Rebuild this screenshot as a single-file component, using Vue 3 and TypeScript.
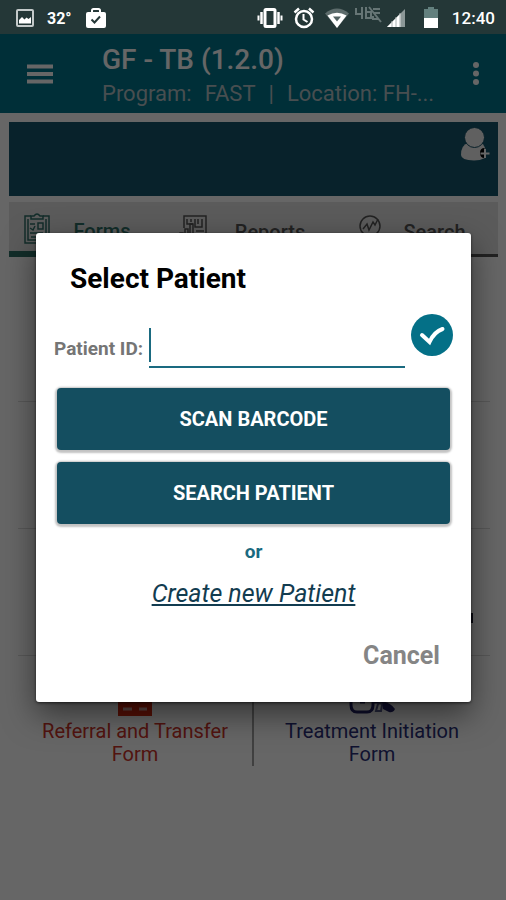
<script setup lang="ts">
import { ref } from 'vue'

interface Tab {
  id: string
  label: string
  active: boolean
}

const tabs: Tab[] = [
  { id: 'forms', label: 'Forms', active: true },
  { id: 'reports', label: 'Reports', active: false },
  { id: 'search', label: 'Search', active: false },
]

const patientId = ref('')
</script>

<template>
  <div class="screen">
    <div class="status">
      <div class="status-group left">
        <svg width="18" height="18" viewBox="0 0 18 18">
          <rect x="1" y="1" width="16" height="16" rx="1" fill="none" stroke="#c4caca" stroke-width="2" />
          <path d="M3 14.500V11l3-3 2.500 2.500 2-2L12.500 10 15 8v6.500z" fill="#fff" />
        </svg>
        <span class="temp">32°</span>
        <svg width="22" height="20" viewBox="0 0 22 20">
          <path d="M7 5V2.500Q7 1 8.500 1h5Q15 1 15 2.500V5" fill="none" stroke="#fff" stroke-width="2" />
          <rect x="1" y="4" width="20" height="16" rx="2" fill="#fff" />
          <path d="M6.500 11.500l3 3 5.500-6" fill="none" stroke="#243737" stroke-width="2" />
        </svg>
      </div>
      <div class="status-group right">
        <svg width="26" height="20" viewBox="0 0 26 20">
          <rect x="8" y="1.500" width="10" height="17" rx="1" fill="none" stroke="#fff" stroke-width="3" />
          <path d="M4.500 4v12M21.500 4v12" stroke="#fff" stroke-width="2.500" />
          <path d="M1.500 7.500v5M24.500 7.500v5" stroke="#fff" stroke-width="2" />
        </svg>
        <svg width="22" height="22" viewBox="0 0 22 22">
          <circle cx="11" cy="12" r="8" fill="none" stroke="#fff" stroke-width="2.500" />
          <path d="M1.500 5.500l4.500-4M20.500 5.500l-4.500-4" stroke="#fff" stroke-width="2.500" />
          <path d="M10.500 7v5.500l4 2.500" fill="none" stroke="#fff" stroke-width="2" />
        </svg>
        <svg width="24" height="20" viewBox="0 0 24 20">
          <path d="M0 5.500Q12-4.500 24 5.500L12 20z" fill="#5d6c6c" />
          <path d="M2.500 7.500Q12 2 21.500 7.500L12 20z" fill="#fff" />
          <path d="M8 8.500h8L12 13.500z" fill="#536363" />
        </svg>
        <svg class="i-lte" width="28" height="18" viewBox="0 0 28 18">
          <path d="M2 2v6h7M8 1v12M12 1v11h5V6h-4M19 3l7 0M20 7h6M15 1l12 15M19 10v3h5" fill="none" stroke="#667575" stroke-width="2" />
        </svg>
        <svg width="18" height="18" viewBox="0 0 18 18">
          <path d="M18 0v18H0z" fill="#8b9797" />
          <path d="M13.500 4.500V18H0z" fill="#fff" />
          <path d="M5 12v6M9 8v10M13 4v14" stroke="#a7b0b0" stroke-width="1" />
        </svg>
        <svg class="i-battery" width="16" height="22" viewBox="0 0 16 22">
          <path d="M1 2h4V0h6v2h4v9H1z" fill="#63807e" />
          <path d="M1 11h14v10H1z" fill="#fff" />
        </svg>
        <span class="clock">12:40</span>
      </div>
    </div>

    <header class="appbar">
      <button class="icon-btn" type="button" aria-label="Menu">
        <svg width="28" height="20" viewBox="0 0 28 20">
          <path d="M1 2.500h26M1 10h26M1 17.500h26" stroke="#fff" stroke-width="4" />
        </svg>
      </button>
      <div class="heading">
        <h1>GF - TB (1.2.0)</h1>
        <p>
          <span>Program:</span>
          <span>FAST</span>
          <span>|</span>
          <span>Location: FH-...</span>
        </p>
      </div>
      <button class="icon-btn" type="button" aria-label="More options">
        <svg width="8" height="26" viewBox="0 0 8 26">
          <g fill="#fff">
            <circle cx="4" cy="4" r="3" />
            <circle cx="4" cy="12.500" r="3" />
            <circle cx="4" cy="21" r="3" />
          </g>
        </svg>
      </button>
    </header>

    <main class="content">
      <section class="banner">
        <button class="icon-btn" type="button" aria-label="Add patient">
          <svg width="30" height="34" viewBox="0 0 30 34">
            <path d="M1 28Q1 18 8 16h13q4 2 5 9l-1 6q-5 2.500-11 2.500Q1 33 1 28z" fill="#f0f0f0" />
            <circle cx="14.500" cy="10.500" r="10" fill="#f0f0f0" stroke="#144f66" stroke-width="1" />
            <path d="M24.500 21Q20 21 20 26t4.500 5z" fill="#000" />
            <path d="M25 22v9M20.500 26.500h9" stroke="#fff" stroke-width="2" />
          </svg>
        </button>
      </section>

      <nav class="tabs">
        <a v-for="tab in tabs" :key="tab.id" href="#" class="tab" :class="{ active: tab.active }">
          <svg v-if="tab.id === 'forms'" width="28" height="32" viewBox="0 0 28 32">
            <g fill="none" stroke="#2f7068" stroke-width="1.500">
              <path d="M8 3H2v27h24V3h-6M5 6v21h18V6" />
              <path d="M8 6V3h3q3-4 6 0h3v3z" />
              <path d="M7 11h5M7 15l3 2 2-4M15 10h5v6h-5zM7 20h13M8 24h12" />
            </g>
          </svg>
          <svg v-else-if="tab.id === 'reports'" width="28" height="32" viewBox="0 0 28 32">
            <g fill="none" stroke="#555" stroke-width="1.500">
              <path d="M5 14V2h22v27H5M8 5v5h6M12 5v3M16 5v8h7V5M19 5v5" />
              <path d="M1 29V19h3v10M6 29V15h3v14M11 29V10h3v19M17 17h8M17 21h8" />
            </g>
          </svg>
          <svg v-else width="24" height="32" viewBox="0 0 24 32">
            <g fill="none" stroke="#555" stroke-width="1.500">
              <circle cx="11" cy="12" r="10" />
              <path d="M4 15l4-5 2 6 4-8 2 3 3-6M6 20l-4 8M16 20l5 8" />
            </g>
          </svg>
          <span>{{ tab.label }}</span>
        </a>
      </nav>

      <section class="forms">
        <div class="row first"></div>
        <div class="row"></div>
        <div class="row"><span class="edge"></span></div>
        <div class="row last">
          <a href="#" class="form referral">
            <svg width="34" height="36" viewBox="0 0 34 36">
              <rect width="34" height="36" fill="#d42a10" />
              <path d="M5 29h9M21 29h8" stroke="#e5b0a8" stroke-width="3" />
              <path d="M5 12h24" stroke="#e5b0a8" stroke-width="3" />
            </svg>
            <span>Referral and Transfer Form</span>
          </a>
          <a href="#" class="form treatment">
            <svg width="46" height="36" viewBox="0 0 46 36">
              <path d="M2 4v21q0 7 6 7h10q6 0 6-7V4z" fill="none" stroke="#24246c" stroke-width="3" />
              <path d="M11 22h5M23 22h11" stroke="#24246c" stroke-width="3" />
              <path d="M27 31l2-7q3-2 4 1l-1 6z" fill="none" stroke="#5a5f92" stroke-width="2" />
              <path d="M33 21q9 2 13 8-2 4-6 3l-6-3z" fill="#24246c" />
            </svg>
            <span>Treatment Initiation Form</span>
          </a>
        </div>
      </section>
    </main>

    <div class="overlay">
      <form class="dialog" role="dialog" aria-labelledby="dialog-title" @submit.prevent>
        <h2 id="dialog-title">Select Patient</h2>
        <div class="field">
          <label for="patient-id">Patient ID:</label>
          <div class="entry">
            <input id="patient-id" v-model="patientId" type="text" autocomplete="off" />
            <span v-if="!patientId" class="caret"></span>
          </div>
          <button class="confirm" type="submit" aria-label="Confirm">
            <svg width="42" height="42" viewBox="0 0 42 42">
              <circle cx="21" cy="21" r="21" fill="#047087" />
              <path d="M11 21l7.500 7Q23 18 31.500 15" fill="none" stroke="#fff" stroke-width="4" stroke-linecap="round" />
            </svg>
          </button>
        </div>
        <button class="action" type="button">SCAN BARCODE</button>
        <button class="action" type="button">SEARCH PATIENT</button>
        <p class="or">or</p>
        <a class="create" href="#">Create new Patient</a>
        <button class="cancel" type="button">Cancel</button>
      </form>
    </div>
  </div>
</template>

<style>
body {
  background: #fff;
}
</style>

<style scoped>
* {
  box-sizing: border-box;
}

.screen {
  position: relative;
  min-height: 100vh;
  font-family: Roboto, "Liberation Sans", sans-serif;
}

h1,
h2,
p {
  margin: 0;
}

button {
  padding: 0;
  border: 0;
  background: none;
  font-family: inherit;
  cursor: pointer;
}

a {
  text-decoration: none;
}

svg {
  display: block;
  flex: none;
}

.status {
  position: relative;
  z-index: 2;
  display: flex;
  justify-content: space-between;
  height: 34px;
  padding: 2px 11px 0 16px;
  background: #243737;
  color: #fff;
}

.status-group {
  display: flex;
  align-items: center;
}

.left {
  gap: 13px;
}

.right {
  gap: 10px;
}

.temp {
  font-size: 16px;
  font-weight: 700;
}

.i-lte {
  margin: 0 -5px 6px;
}

.i-battery {
  margin: 0 3px 0 8px;
}

.clock {
  font-size: 17px;
  font-weight: 500;
}

.appbar {
  display: flex;
  align-items: center;
  height: 79px;
  padding: 0 26px;
  background: #00758c;
  color: #fff;
}

.icon-btn {
  flex: none;
}

.heading {
  flex: 1;
  min-width: 0;
  padding: 5px 0 0 48px;
}

h1 {
  font-size: 28px;
  font-weight: 500;
  line-height: 36px;
}

.heading p {
  display: flex;
  gap: 13px;
  overflow: hidden;
  color: #b3c4c8;
  font-size: 22px;
  line-height: 32px;
  white-space: nowrap;
}

.content {
  padding: 9px 8px 0 9px;
}

.banner {
  display: flex;
  justify-content: flex-end;
  align-items: flex-start;
  height: 74px;
  padding: 5px 8px;
  background: #14556b;
}

.tabs {
  display: grid;
  grid-template-columns: 156fr 180fr 153fr;
  align-items: end;
  height: 55px;
  margin-top: 6px;
  background: #e4e4e4;
}

.tab {
  display: flex;
  align-items: center;
  height: 100%;
  padding: 4px 12px 0 14px;
  border-bottom: 3px solid #555;
  color: #555;
  font-size: 20px;
  font-weight: 500;
}

.tab span {
  flex: 1;
  padding-top: 4px;
  text-align: center;
}

.tab.active {
  border-bottom: 6px solid #2f7068;
  color: #2f7068;
}

.forms {
  padding: 0 8px 0 9px;
}

.row {
  display: flex;
  justify-content: flex-end;
  align-items: flex-end;
  height: 127px;
  border-bottom: 1px solid #dcdcdc;
}

.row.first {
  height: 145px;
}

.row.last {
  display: grid;
  grid-template-columns: 1fr 1fr;
  align-items: stretch;
  height: auto;
  border: 0;
}

.edge {
  width: 4px;
  height: 10px;
  margin: 0 17px 32px 0;
  background: #14142c;
}

.form {
  display: flex;
  flex-direction: column;
  align-items: center;
  gap: 4px;
  padding: 24px 16px 0;
  font-size: 20px;
  line-height: 23px;
  text-align: center;
}

.referral {
  border-right: 2px solid #a0a0a0;
  color: #cc3329;
}

.treatment {
  color: #2a2f78;
}

.overlay {
  position: absolute;
  inset: 0;
  z-index: 1;
  display: flex;
  align-items: center;
  padding: 34px 35px 0 36px;
  background: rgba(0, 0, 0, 0.6);
}

.dialog {
  display: flex;
  flex: 1;
  flex-direction: column;
  min-width: 0;
  padding: 28px 18px 30px;
  border-radius: 3px;
  background: #fff;
  box-shadow: 0 12px 32px rgba(0, 0, 0, 0.5), 0 1px 3px rgba(0, 0, 0, 0.6);
}

h2 {
  padding-left: 16px;
  color: #000;
  font-size: 28px;
  font-weight: 700;
  line-height: 36px;
}

.field {
  display: flex;
  gap: 6px;
  height: 54px;
  margin-top: 17px;
}

label {
  align-self: center;
  padding-top: 16px;
  color: #757575;
  font-size: 19px;
  font-weight: 700;
}

.entry {
  position: relative;
  flex: 1;
  min-width: 0;
}

input {
  width: 100%;
  height: 54px;
  padding: 14px 4px 4px;
  border: 0;
  border-bottom: 2px solid #1a6a80;
  border-radius: 0;
  outline: none;
  background: transparent;
  color: #222;
  font-family: inherit;
  font-size: 22px;
}

.caret {
  position: absolute;
  left: 0;
  bottom: 6px;
  width: 2px;
  height: 34px;
  background: #1a6a80;
}

.confirm {
  align-self: flex-start;
}

.action {
  height: 62px;
  margin: 20px 3px 0;
  border-radius: 4px;
  background: #144e60;
  box-shadow: 0 1px 2px 2px rgba(0, 0, 0, 0.24);
  color: #fff;
  font-size: 20px;
  font-weight: 700;
}

.action + .action {
  margin-top: 12px;
}

.or {
  margin-top: 16px;
  color: #1a6a80;
  font-size: 19px;
  font-weight: 700;
  line-height: 24px;
  text-align: center;
}

.create {
  align-self: center;
  margin-top: 14px;
  color: #123c50;
  font-size: 25px;
  font-style: italic;
  line-height: 32px;
  text-decoration: underline;
}

.cancel {
  align-self: flex-end;
  margin: 30px 13px 0 0;
  color: #858585;
  font-size: 25px;
  font-weight: 700;
  line-height: 32px;
}
</style>
